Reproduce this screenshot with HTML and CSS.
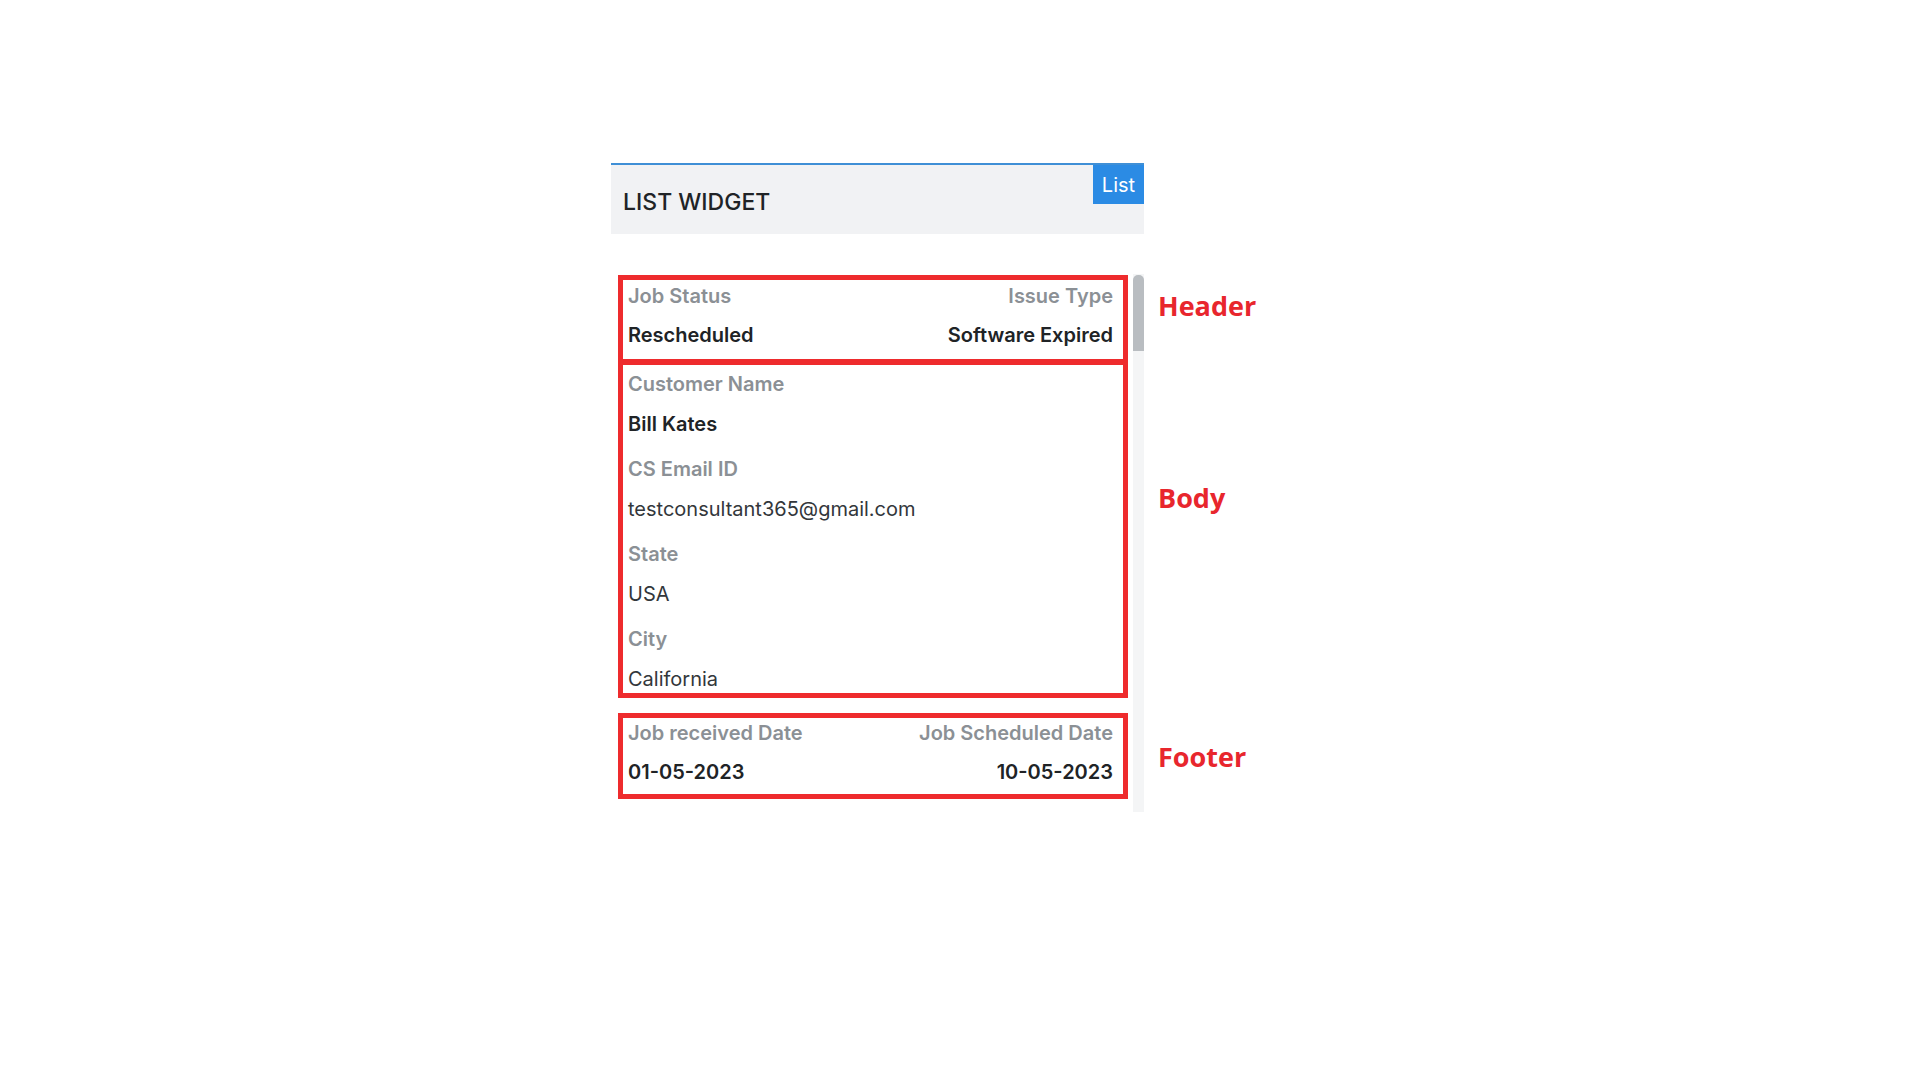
FILE: index.html
```html
<!DOCTYPE html>
<html lang="en">
<head>
    <meta charset="UTF-8">
    <meta name="viewport" content="width=device-width, initial-scale=1.0">
    <title>List Widget</title>
    <link rel="stylesheet" href="styles.css">
</head>
<body>
    <div class="stage">
        <div class="widget">
            <div class="widget-head">
                <h2 class="widget-title">LIST WIDGET</h2>
                <button class="list-btn">List</button>
            </div>
            <div class="widget-body">
                <div class="list">
                    <div class="box box-header">
                        <div class="pair">
                            <div class="field">
                                <div class="label">Job Status</div>
                                <div class="value strong">Rescheduled</div>
                            </div>
                            <div class="field right">
                                <div class="label">Issue Type</div>
                                <div class="value strong">Software Expired</div>
                            </div>
                        </div>
                    </div>
                    <div class="box box-body">
                        <div class="field">
                            <div class="label">Customer Name</div>
                            <div class="value strong">Bill Kates</div>
                        </div>
                        <div class="field">
                            <div class="label">CS Email ID</div>
                            <div class="value">testconsultant365@gmail.com</div>
                        </div>
                        <div class="field">
                            <div class="label">State</div>
                            <div class="value">USA</div>
                        </div>
                        <div class="field">
                            <div class="label">City</div>
                            <div class="value">California</div>
                        </div>
                    </div>
                    <div class="box box-footer">
                        <div class="pair">
                            <div class="field">
                                <div class="label">Job received Date</div>
                                <div class="value strong">01-05-2023</div>
                            </div>
                            <div class="field right">
                                <div class="label">Job Scheduled Date</div>
                                <div class="value strong">10-05-2023</div>
                            </div>
                        </div>
                    </div>
                </div>
                <div class="scrollbar">
                    <div class="thumb"></div>
                </div>
            </div>
        </div>
        <div class="notes">
            <div class="note note-header">Header</div>
            <div class="note note-body">Body</div>
            <div class="note note-footer">Footer</div>
        </div>
    </div>
</body>
</html>
```

FILE: styles.css
```css
body {
    margin: 0;
    background-color: #ffffff;
    font-family: Inter, "Liberation Sans", sans-serif;
}
.stage {
    display: flex;
    align-items: flex-start;
    padding: 163px 0 0 611px;
}
.widget {
    width: 533px;
}
.widget-head {
    display: flex;
    justify-content: space-between;
    align-items: flex-start;
    height: 69px;
    background-color: #f1f2f4;
    border-top: 2px solid #3f8fd6;
}
.widget-title {
    margin: 23px 0 0 12px;
    font-size: 23px;
    line-height: 28px;
    font-weight: 500;
    color: #202326;
}
.list-btn {
    width: 51px;
    height: 39px;
    padding: 0;
    border: none;
    background-color: #2b8be4;
    color: #ffffff;
    font-family: Inter, "Liberation Sans", sans-serif;
    font-size: 20px;
}
.widget-body {
    display: flex;
    margin-top: 40px;
}
.list {
    width: 510px;
    padding: 1px 5px 13px 7px;
}
.scrollbar {
    width: 11px;
    background-color: #f4f5f6;
}
.thumb {
    height: 76px;
    margin-top: 1px;
    background-color: #b9bdc1;
    border-radius: 5px 5px 0 0;
}
.box {
    border: 5px solid #ee2b2d;
    padding: 4px 10px 12px 5px;
}
.box-body {
    border-top: 1px solid #ee2b2d;
    padding: 7px 10px 2px 5px;
    display: flex;
    flex-direction: column;
    gap: 21px;
}
.box-footer {
    margin-top: 15px;
    padding: 3px 10px 10px 5px;
}
.pair {
    display: flex;
    justify-content: space-between;
}
.field.right {
    text-align: right;
}
.label {
    font-size: 20px;
    line-height: 24px;
    font-weight: 600;
    color: #8b9095;
}
.value {
    margin-top: 16px;
    font-size: 20px;
    line-height: 24px;
    color: #33373b;
}
.box-header .value,
.box-footer .value {
    margin-top: 15px;
}
.value.strong {
    font-weight: 600;
    color: #202326;
}
.notes {
    display: flex;
    flex-direction: column;
    margin-left: 14px;
}
.note {
    font-family: "Open Sans", "Liberation Sans", sans-serif;
    font-size: 27px;
    line-height: 34px;
    font-weight: 700;
    color: #e8262d;
}
.note-header {
    margin-top: 126px;
}
.note-body {
    margin-top: 158px;
}
.note-footer {
    margin-top: 225px;
}
```
